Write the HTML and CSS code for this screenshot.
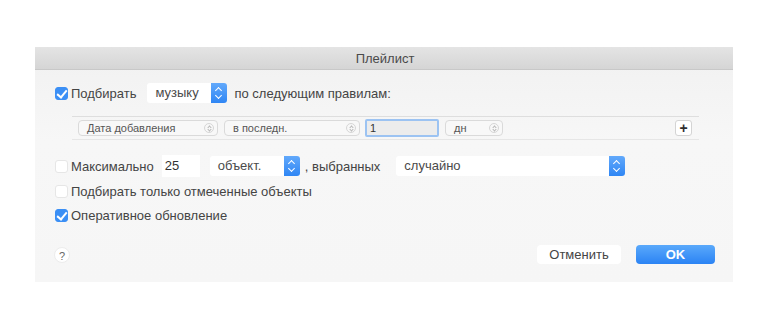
FILE: index.html
```html
<!DOCTYPE html>
<html lang="ru">
  <head>
    <meta charset="UTF-8" />
    <title>Плейлист</title>
    <link rel="stylesheet" href="styles.css">
  </head>
  <body>
    <div class="window">
      <div class="titlebar">Плейлист</div>
      <div class="content">
        <div class="row row-match">
          <span class="check on"></span>
          <span class="label">Подбирать</span>
          <span class="popup popup-kind">музыку<span class="stepper"></span></span>
          <span class="label">по следующим правилам:</span>
        </div>

        <div class="rules">
          <span class="mini mini-field">Дата добавления<span class="arrows"></span></span>
          <span class="mini mini-op">в последн.<span class="arrows"></span></span>
          <span class="mini-input">1</span>
          <span class="mini mini-unit">дн<span class="arrows"></span></span>
          <span class="plus">+</span>
        </div>

        <div class="row row-limit">
          <span class="check"></span>
          <span class="label">Максимально</span>
          <span class="field">25</span>
          <span class="popup popup-items">объект.<span class="stepper"></span></span>
          <span class="label">, выбранных</span>
          <span class="popup popup-order">случайно<span class="stepper"></span></span>
        </div>

        <div class="row row-plain">
          <span class="check"></span>
          <span class="label">Подбирать только отмеченные объекты</span>
        </div>

        <div class="row row-plain">
          <span class="check on"></span>
          <span class="label">Оперативное обновление</span>
        </div>

        <div class="footer">
          <span class="help">?</span>
          <span class="btn btn-cancel">Отменить</span>
          <span class="btn btn-ok">OK</span>
        </div>
      </div>
    </div>
  </body>
</html>
```

FILE: styles.css
```css
* {
  box-sizing: border-box;
}
html,
body {
  margin: 0;
  padding: 0;
  background: #ffffff;
  font-family: "Liberation Sans", Arial, sans-serif;
  font-size: 13px;
  color: #3a3a3a;
}
.window {
  width: 698px;
  height: 235px;
  margin: 47px 0 0 35px;
  background: linear-gradient(#f1f1f1, #f7f7f7 40%, #f6f6f6);
  display: flex;
  flex-direction: column;
}
.titlebar {
  height: 23px;
  line-height: 23px;
  text-align: center;
  background: linear-gradient(#e4e4e4, #d5d5d5);
  border-bottom: 1px solid #c8c8c8;
  color: #4a4a4a;
  font-size: 13px;
  padding-left: 2px;
}
.content {
  flex: 1;
  padding: 13px 18px 0 20px;
  display: flex;
  flex-direction: column;
}
.row {
  display: flex;
  align-items: center;
}
.row-match {
  height: 20px;
}
.check {
  width: 13px;
  height: 13px;
  border-radius: 3px;
  background: #ffffff;
  border: 1px solid #e6e6e6;
  margin-right: 3px;
  position: relative;
  flex: none;
}
.check.on {
  background: #3b8ff5;
  border-color: #3b8ff5;
}
.check.on::after {
  content: "";
  position: absolute;
  left: 3px;
  top: 0px;
  width: 4px;
  height: 8px;
  border: solid #ffffff;
  border-width: 0 2px 2px 0;
  transform: rotate(40deg);
}
.label {
  white-space: nowrap;
  color: #444444;
}
.popup {
  height: 20px;
  line-height: 20px;
  background: #ffffff;
  border-radius: 3px;
  padding-left: 8px;
  position: relative;
  color: #4a4a4a;
}
.popup .stepper {
  position: absolute;
  right: 0;
  top: 0;
  width: 16px;
  height: 20px;
  border-radius: 0 3px 3px 0;
  background: linear-gradient(#62a9fb, #2f86f4);
}
.popup .stepper::before,
.popup .stepper::after {
  content: "";
  position: absolute;
  left: 5px;
  width: 4px;
  height: 4px;
  border: solid #ffffff;
  border-width: 1.5px 0 0 1.5px;
}
.popup .stepper::before {
  top: 5px;
  transform: rotate(45deg);
}
.popup .stepper::after {
  top: 10px;
  transform: rotate(225deg);
}
.popup-kind {
  width: 80px;
  margin: 0 7px 0 11px;
}
.rules {
  margin: 13px 16px 0 17px;
  height: 24px;
  border-top: 1px solid #dedede;
  border-bottom: 1px solid #e6e6e6;
  display: flex;
  align-items: center;
  padding-left: 6px;
  font-size: 11px;
}
.mini {
  height: 16px;
  line-height: 14px;
  border: 1px solid #dadada;
  border-radius: 4px;
  background: #f8f8f8;
  padding-left: 8px;
  position: relative;
  color: #555555;
}
.mini .arrows {
  position: absolute;
  right: 3px;
  top: 2px;
  width: 10px;
  height: 10px;
  border: 1px solid #d6d6d6;
  border-radius: 50%;
}
.mini .arrows::before,
.mini .arrows::after {
  content: "";
  position: absolute;
  left: 3px;
  width: 2px;
  height: 2px;
  border: solid #b8b8b8;
  border-width: 1px 0 0 1px;
}
.mini .arrows::before {
  top: 2px;
  transform: rotate(45deg);
}
.mini .arrows::after {
  top: 4px;
  transform: rotate(225deg);
}
.mini-field {
  width: 140px;
}
.mini-op {
  width: 136px;
  margin-left: 6px;
}
.mini-input {
  width: 74px;
  height: 18px;
  line-height: 14px;
  margin-left: 5px;
  padding-left: 3px;
  border: 2px solid #9cc3f2;
  border-radius: 2px;
  background: #ececec;
  color: #333;
}
.mini-unit {
  width: 58px;
  margin-left: 6px;
}
.plus {
  margin-left: auto;
  width: 17px;
  height: 16px;
  line-height: 15px;
  text-align: center;
  border: 1px solid #d4d4d4;
  border-radius: 3px;
  background: #ffffff;
  font-size: 14px;
  font-weight: bold;
  color: #2e2e2e;
  margin-right: 7px;
}
.row-limit {
  margin-top: 15px;
  height: 22px;
}
.field {
  width: 38px;
  height: 22px;
  line-height: 22px;
  background: #ffffff;
  margin-left: 8px;
  padding-left: 3px;
  color: #333;
}
.popup-items {
  width: 90px;
  margin: 0 5px 0 10px;
}
.popup-order {
  width: 229px;
  margin-left: 16px;
}
.row-plain {
  margin-top: 5px;
  height: 19px;
}
.footer {
  margin-top: 20px;
  display: flex;
  align-items: center;
  height: 19px;
}
.help {
  width: 16px;
  height: 16px;
  line-height: 16px;
  border-radius: 50%;
  background: #ffffff;
  border: 1px solid #ececec;
  text-align: center;
  font-size: 11px;
  color: #666;
  margin-left: -1px;
}
.btn {
  height: 19px;
  line-height: 19px;
  border-radius: 4px;
  text-align: center;
}
.btn-cancel {
  margin-left: auto;
  width: 84px;
  background: #ffffff;
  color: #444;
}
.btn-ok {
  width: 79px;
  margin-left: 15px;
  margin-right: 0;
  background: linear-gradient(#5aa9fb, #2b83f4);
  color: #ffffff;
  font-weight: bold;
}
```
